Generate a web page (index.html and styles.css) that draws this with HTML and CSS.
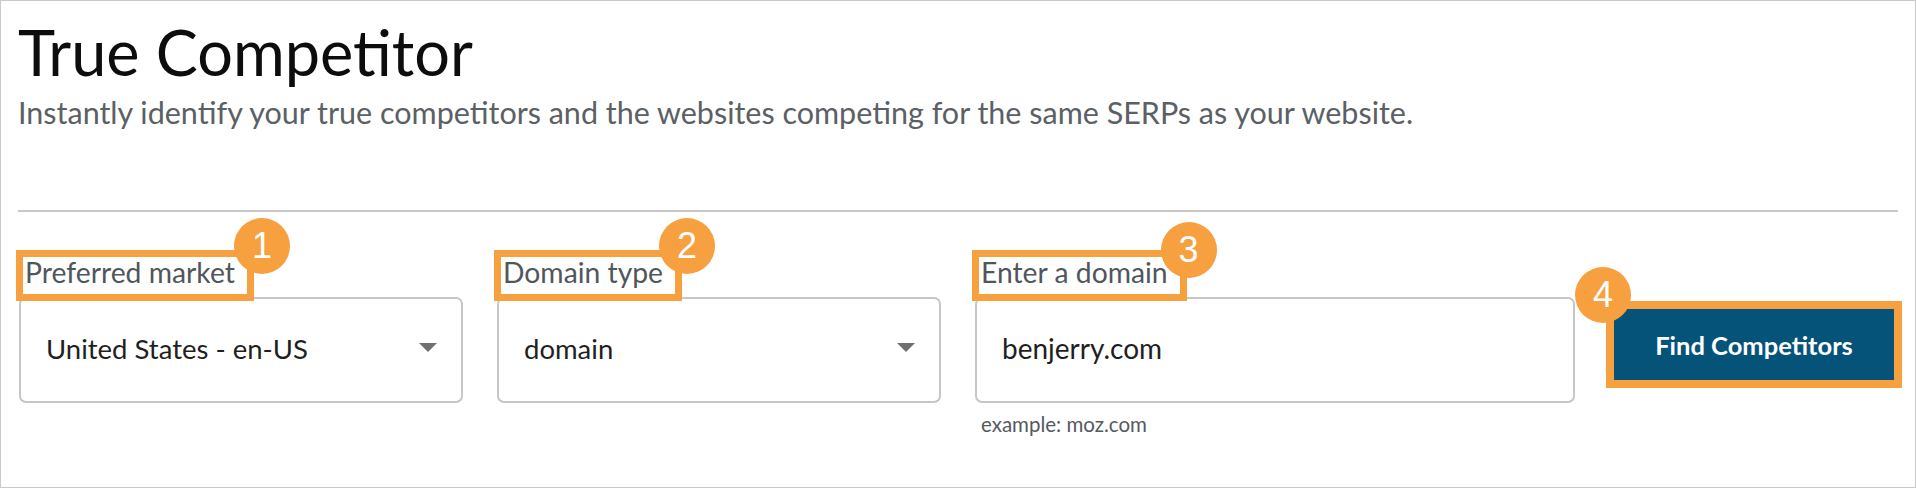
FILE: index.html
```html
<!DOCTYPE html>
<html lang="en">
<head>
<meta charset="utf-8">
<title>True Competitor</title>
<link rel="stylesheet" href="styles.css">
</head>
<body>
<div class="page">
  <header class="intro">
    <h1 class="title">True Competitor</h1>
    <p class="subtitle">Instantly identify your true competitors and the websites competing for the same SERPs as your website.</p>
  </header>
  <hr class="rule">
  <form class="search" onsubmit="return false">
    <div class="field field-select">
      <label class="mark mark-label"><span class="label-text">Preferred market</span><span class="badge badge-1">1</span></label>
      <div class="control select"><span class="value">United States - en-US</span><span class="caret"></span></div>
    </div>
    <div class="field field-select">
      <label class="mark mark-label"><span class="label-text">Domain type</span><span class="badge badge-2">2</span></label>
      <div class="control select"><span class="value">domain</span><span class="caret"></span></div>
    </div>
    <div class="field field-input">
      <label class="mark mark-label"><span class="label-text">Enter a domain</span><span class="badge badge-3">3</span></label>
      <div class="control input"><span class="value value-input">benjerry.com</span></div>
      <div class="hint">example: moz.com</div>
    </div>
    <div class="action">
      <div class="mark mark-button"><button class="btn" type="submit">Find Competitors</button><span class="badge badge-4">4</span></div>
    </div>
  </form>
</div>
</body>
</html>
```

FILE: styles.css
```css
* { box-sizing: border-box; }

html, body {
  margin: 0;
  padding: 0;
  background: #ffffff;
}

body {
  font-family: Lato, "Open Sans", "Liberation Sans", sans-serif;
  color: #222;
}

.page {
  width: 1916px;
  height: 488px;
  border: 1px solid #c9c9c9;
  padding: 0 17px 0 17px;
  background: #fff;
  overflow: hidden;
}

.intro {
  padding-top: 13px;
}

.title {
  margin: 0;
  font-size: 63px;
  font-weight: 400;
  line-height: 76px;
  color: #0d0d0d;
}

.subtitle {
  margin: 4px 0 0 0;
  font-size: 30.5px;
  line-height: 36px;
  color: #5b6065;
}

.rule {
  margin: 80px 0 0 0;
  border: 0;
  height: 2px;
  background: #c8c8c8;
}

.search {
  display: flex;
  align-items: flex-start;
  margin-top: 38px;
  padding-left: 1px;
}

.field {
  display: flex;
  flex-direction: column;
  align-items: flex-start;
  flex-shrink: 0;
}

.field-select { width: 444px; margin-right: 34px; }
.field-input { width: 600px; margin-right: 31px; }

.mark {
  position: relative;
  border: 7px solid #f7a03f;
  background: #fff;
  z-index: 1;
}

.mark-label {
  display: flex;
  align-items: flex-start;
  height: 51px;
  margin-left: -3px;
  margin-bottom: -4px;
  padding: 1px 12px 0 2px;
}

.label-text {
  font-size: 28.3px;
  line-height: 28px;
  color: #50565b;
}

.badge {
  position: absolute;
  width: 56px;
  height: 56px;
  border-radius: 50%;
  background: #f7a03f;
  color: #fff;
  font-family: "Liberation Sans", Arial, sans-serif;
  font-size: 36px;
  line-height: 56px;
  text-align: center;
  z-index: 2;
}

.badge-1 { right: -43px; top: -39px; }
.badge-2 { right: -40px; top: -39px; }
.badge-3 { right: -37px; top: -35px; }
.badge-4 { left: -39px; top: -42px; }

.control {
  width: 100%;
  height: 106px;
  border: 2px solid #c6c6c6;
  border-radius: 7px;
  display: flex;
  align-items: center;
  background: #fff;
  padding-bottom: 3px;
}

.select {
  padding-left: 25px;
  padding-right: 24px;
  justify-content: space-between;
}

.input {
  padding-left: 25px;
}

.value {
  font-size: 27.5px;
  line-height: 33px;
  color: #1f1f1f;
}

.value-input {
  font-size: 28px;
}

.caret {
  width: 0;
  height: 0;
  border-left: 9px solid transparent;
  border-right: 9px solid transparent;
  border-top: 9px solid #707070;
  margin-top: -3px;
}

.hint {
  margin-top: 9px;
  padding-left: 6px;
  font-size: 20.5px;
  line-height: 24px;
  color: #555a5f;
}

.action {
  margin-top: 51px;
  flex-shrink: 0;
}

.mark-button {
  display: flex;
  border-width: 8px;
}

.btn {
  width: 280px;
  height: 71px;
  border: 0;
  margin: 0;
  padding: 0;
  background: #06537a;
  color: #fff;
  font-family: Lato, "Open Sans", "Liberation Sans", sans-serif;
  font-size: 25.5px;
  font-weight: 700;
  cursor: pointer;
}
```
